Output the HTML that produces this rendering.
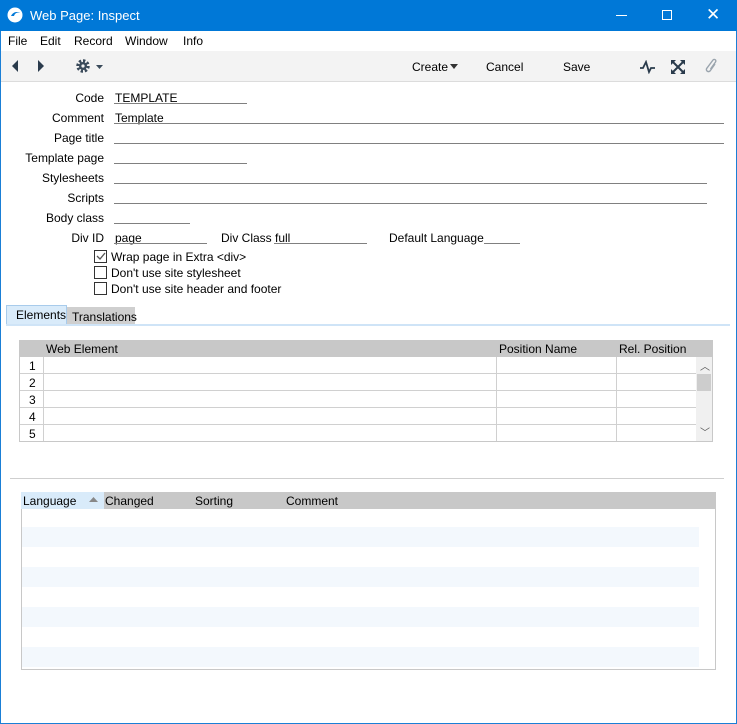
<!DOCTYPE html>
<html><head><meta charset="utf-8"><style>
*{margin:0;padding:0;box-sizing:border-box}
body{width:737px;height:724px;overflow:hidden;font-family:"Liberation Sans",sans-serif;font-size:12px;color:#000;background:#fff;position:relative}
.a{position:absolute;white-space:nowrap}
.lbl{position:absolute;text-align:right;width:104px;left:0}
.ul{position:absolute;height:1px;background:#808080}
.cb{position:absolute;width:13px;height:13px;border:1px solid #333;background:#fff}
.hl{position:absolute;height:1px;background:#d0d0d0}
.vl{position:absolute;width:1px;background:#d0d0d0}
</style></head><body>
<div class="a" style="left:0;top:0;width:737px;height:724px;border:1px solid #1a7fd6;border-top:none"></div>
<div class="a" style="left:0;top:0;width:737px;height:31px;background:#0078d7;color:#fff">
 <svg class="a" style="left:7px;top:7px" width="16" height="16" viewBox="0 0 16 16"><circle cx="8" cy="8" r="7.5" fill="#fff"/><path d="M4 9c2-4 6-5 9-3-3-1-5 0-6 3z" fill="#0078d7"/></svg>
 <span class="a" style="left:30px;top:8px;font-size:13px">Web Page: Inspect</span>
 <div class="a" style="left:616px;top:15px;width:11px;height:1px;background:#fff"></div>
 <div class="a" style="left:662px;top:10px;width:10px;height:10px;border:1px solid #fff"></div>
 <span class="a" style="left:706px;top:5px;font-size:17px">✕</span>
</div>
<div class="a" style="left:1px;top:31px;width:735px;height:20px;background:#fff"></div>
<span class="a" style="left:8px;top:34px">File</span><span class="a" style="left:40px;top:34px">Edit</span><span class="a" style="left:74px;top:34px">Record</span><span class="a" style="left:125px;top:34px">Window</span><span class="a" style="left:183px;top:34px">Info</span>
<div class="a" style="left:1px;top:51px;width:735px;height:31px;background:#f3f3f3;border-bottom:1px solid #dcdcdc"></div>
<svg class="a" style="left:10px;top:59px" width="40" height="14"><path d="M8 1L2 7L8 13z" fill="#2a3b4c"/><path d="M28 1L34 7L28 13z" fill="#2a3b4c"/></svg>
<svg class="a" style="left:75px;top:58px" width="30" height="16" viewBox="0 0 30 16"><circle cx="8" cy="8" r="5" fill="none" stroke="#3a4a5a" stroke-width="3.5" stroke-dasharray="2.2 1.7"/><circle cx="8" cy="8" r="4" fill="#3a4a5a"/><circle cx="8" cy="8" r="1.6" fill="#f3f3f3"/><path d="M21 7h7l-3.5 4z" fill="#3a4a5a"/></svg>
<span class="a" style="left:412px;top:60px">Create</span><svg class="a" style="left:450px;top:64px" width="8" height="5"><path d="M0 0h8L4 5z" fill="#333"/></svg>
<span class="a" style="left:486px;top:60px">Cancel</span>
<span class="a" style="left:563px;top:60px">Save</span>
<svg class="a" style="left:640px;top:60px" width="16" height="14"><path d="M0 8h3l3-6 3 10 2-4h4" fill="none" stroke="#2a3b4c" stroke-width="1.8"/></svg>
<svg class="a" style="left:671px;top:60px" width="14" height="14"><path d="M1 1l12 12M13 1L1 13" stroke="#2a3b4c" stroke-width="2"/><path d="M0 0h5L0 5zM14 0v5L9 0zM0 14v-5l5 5zM14 14h-5l5-5z" fill="#2a3b4c"/></svg>
<svg class="a" style="left:704px;top:58px" width="14" height="18"><path d="M11 6l-5 7a2 2 0 0 1-3-3l6-8a1.5 1.5 0 0 1 2.5 2l-5 7" fill="none" stroke="#9aa4ad" stroke-width="1.4"/></svg>

<div class="lbl" style="top:91px">Code</div><span class="a" style="left:115px;top:91px">TEMPLATE</span><div class="ul" style="left:114px;top:103px;width:133px"></div>
<div class="lbl" style="top:111px">Comment</div><span class="a" style="left:115px;top:111px">Template</span><div class="ul" style="left:114px;top:123px;width:610px"></div>
<div class="lbl" style="top:131px">Page title</div><div class="ul" style="left:114px;top:143px;width:610px"></div>
<div class="lbl" style="top:151px">Template page</div><div class="ul" style="left:114px;top:163px;width:133px"></div>
<div class="lbl" style="top:171px">Stylesheets</div><div class="ul" style="left:114px;top:183px;width:593px"></div>
<div class="lbl" style="top:191px">Scripts</div><div class="ul" style="left:114px;top:203px;width:593px"></div>
<div class="lbl" style="top:211px">Body class</div><div class="ul" style="left:114px;top:223px;width:76px"></div>
<div class="lbl" style="top:231px">Div ID</div><span class="a" style="left:115px;top:231px">page</span><div class="ul" style="left:114px;top:243px;width:93px"></div>
<span class="a" style="left:221px;top:231px">Div Class</span><span class="a" style="left:275px;top:231px">full</span><div class="ul" style="left:274px;top:243px;width:93px"></div>
<span class="a" style="left:389px;top:231px">Default Language</span><div class="ul" style="left:484px;top:243px;width:36px"></div>
<div class="cb" style="left:94px;top:250px"></div><svg class="a" style="left:96px;top:252px" width="10" height="9"><path d="M1 4l3 3 5-6" fill="none" stroke="#555" stroke-width="1.3"/></svg><span class="a" style="left:111px;top:250px">Wrap page in Extra &lt;div&gt;</span>
<div class="cb" style="left:94px;top:266px"></div><span class="a" style="left:111px;top:266px">Don't use site stylesheet</span>
<div class="cb" style="left:94px;top:282px"></div><span class="a" style="left:111px;top:282px">Don't use site header and footer</span>

<div class="a" style="left:6px;top:305px;width:61px;height:20px;background:#d9ebfa;border:1px solid #a8cbeb;border-bottom:none"></div><span class="a" style="left:16px;top:308px">Elements</span>
<div class="a" style="left:67px;top:307px;width:68px;height:17px;background:#cfcfcf"></div><span class="a" style="left:72px;top:310px">Translations</span>
<div class="a" style="left:6px;top:324px;width:724px;height:2px;background:#cfe4f7"></div>

<div class="a" style="left:19px;top:340px;width:694px;height:102px;border:1px solid #c8c8c8;background:#fff"></div>
<div class="a" style="left:19px;top:340px;width:694px;height:17px;background:#c8c8c8"></div>
<span class="a" style="left:46px;top:342px">Web Element</span><span class="a" style="left:499px;top:342px">Position Name</span><span class="a" style="left:619px;top:342px">Rel. Position</span>
<div class="hl" style="left:20px;top:373px;width:676px"></div><div class="hl" style="left:20px;top:390px;width:676px"></div><div class="hl" style="left:20px;top:407px;width:676px"></div><div class="hl" style="left:20px;top:424px;width:676px"></div>
<div class="vl" style="left:43px;top:357px;height:84px"></div><div class="vl" style="left:496px;top:357px;height:84px"></div><div class="vl" style="left:616px;top:357px;height:84px"></div>
<div class="a" style="left:696px;top:357px;width:16px;height:84px;background:#f0f0f0"></div><div class="a" style="left:697px;top:374px;width:14px;height:17px;background:#cdcdcd"></div>
<span class="a" style="left:700px;top:358px;font-size:10px;color:#555">︿</span><span class="a" style="left:700px;top:424px;font-size:10px;color:#555">﹀</span>
<span class="a" style="left:29px;top:359px">1</span><span class="a" style="left:29px;top:376px">2</span><span class="a" style="left:29px;top:393px">3</span><span class="a" style="left:29px;top:410px">4</span><span class="a" style="left:29px;top:427px">5</span>

<div class="a" style="left:10px;top:478px;width:714px;height:1px;background:#cfcfcf"></div>

<div class="a" style="left:21px;top:492px;width:695px;height:178px;border:1px solid #c8c8c8;background:#fff"></div>
<div class="a" style="left:21px;top:492px;width:695px;height:17px;background:#c8c8c8"></div>
<div class="a" style="left:21px;top:492px;width:83px;height:17px;background:#d9ebfa"></div>
<span class="a" style="left:23px;top:494px">Language</span><svg class="a" style="left:89px;top:497px" width="9" height="5"><path d="M0 5h9L4.5 0z" fill="#888"/></svg>
<span class="a" style="left:105px;top:494px">Changed</span><span class="a" style="left:195px;top:494px">Sorting</span><span class="a" style="left:286px;top:494px">Comment</span>
<div class="a" style="left:22px;top:527px;width:677px;height:20px;background:#f3f8fd"></div>
<div class="a" style="left:22px;top:567px;width:677px;height:20px;background:#f3f8fd"></div>
<div class="a" style="left:22px;top:607px;width:677px;height:20px;background:#f3f8fd"></div>
<div class="a" style="left:22px;top:647px;width:677px;height:20px;background:#f3f8fd"></div>
</body></html>
